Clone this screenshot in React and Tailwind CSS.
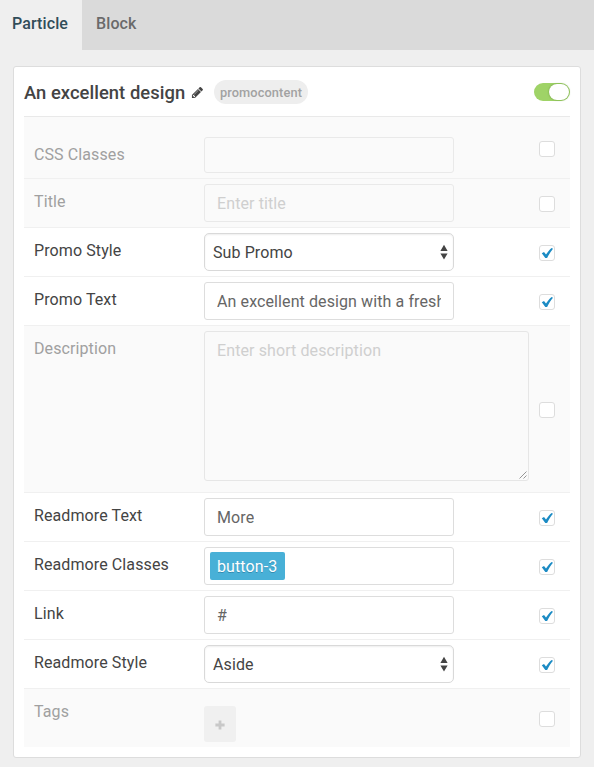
import { clsx } from "clsx";

function Check({ on, className }) {
  return (
    <span
      className={clsx(
        "ml-auto mr-[15px] flex size-4 shrink-0 items-center justify-center rounded-[3px] border border-[#dddddd] bg-white",
        className
      )}
    >
      {on && (
        <svg viewBox="0 0 14 14" className="size-3.5 shrink-0" fill="#1b8bc4">
          <path d="M1.8 7.3 L4 6.1 L6 8.6 C7.4 6.3 9.2 4 11.6 2 L13 2.7 C10.8 5.4 8.8 8.4 7.1 12.1 L5.3 12.1 Z" />
        </svg>
      )}
    </span>
  );
}

function Row({ label, on, height = "h-[49px]", labelPad = "pt-[11px]", fieldPad = "pt-[5px]", checkPad = "mt-[17px]", last, children }) {
  return (
    <div
      className={clsx(
        "flex items-start pl-2.5",
        height,
        !last && "border-b border-[#f0f0f0]",
        on ? "bg-white text-[#444444]" : "bg-[#fafafa] text-[#a0a0a0]"
      )}
    >
      <div className={clsx("w-[170px] shrink-0 leading-6", labelPad)}>{label}</div>
      <div className={fieldPad}>{children}</div>
      <Check on={on} className={checkPad} />
    </div>
  );
}

function Field({ children, muted, className = "h-[38px]" }) {
  return (
    <div
      className={clsx(
        "flex w-[250px] items-center rounded-[3px] border px-3 pt-0.5",
        className,
        muted ? "border-[#e9e9e9] bg-[#fafafa] text-[#cfcfcf]" : "border-[#dddddd] bg-white text-[#666666]"
      )}
    >
      <span className="overflow-hidden whitespace-nowrap leading-6">{children}</span>
    </div>
  );
}

function Select({ children }) {
  return (
    <div className="flex h-[38px] w-[250px] items-center justify-between rounded-[5px] border border-[#d9d9d9] bg-white pl-2 pr-[5px] text-[#444444] shadow-[inset_0_1px_2px_rgba(0,0,0,0.07)]">
      <span className="pt-0.5">{children}</span>
      <svg viewBox="0 0 8 16" className="h-4 w-2" fill="#444444">
        <path d="M4 0.8 L7.6 7 H0.4 Z M4 15.5 L7.6 9.4 H0.4 Z" />
      </svg>
    </div>
  );
}

export default function App() {
  return (
    <div className="h-[767px] w-[594px] overflow-hidden bg-[#efefef] font-['Roboto',sans-serif] text-[16px] tracking-[0.1px]">
      <nav className="flex h-[50px] bg-[#dadada] font-medium leading-6">
        <div className="w-[82px] bg-[#efefef] pl-3 pt-3 text-[#314d59]">Particle</div>
        <div className="pl-3.5 pt-3 text-[#6a6a6a]">Block</div>
      </nav>

      <section className="ml-[13px] mt-4 h-[692px] w-[568px] rounded-[3px] border border-[#dddddd] bg-white px-2.5">
        <header className="flex h-[50px] items-center border-b border-[#e9e9e9] pt-px">
          <h1 className="w-[161px] whitespace-nowrap pt-0.5 text-[18.4px] font-medium tracking-[0.04px] text-[#444444]">
            An excellent design
          </h1>
          <svg viewBox="0 0 1792 1792" className="ml-1.5 size-[13px]" fill="#444444">
            <path d="M491 1536l91-91-235-235-91 91v107h128v128h107zm523-928q0-22-22-22-10 0-17 7l-542 542q-7 7-7 17 0 22 22 22 10 0 17-7l542-542q7-7 7-17zm-54-192l416 416-832 832h-416v-416zm683 96q0 53-37 90l-166 166-416-416 166-165q36-38 90-38 53 0 91 38l235 234q37 39 37 91z" />
          </svg>
          <span className="ml-2.5 flex h-6 w-[94px] items-center justify-center rounded-full bg-[#eeeeee] pt-px text-[12.8px] font-medium text-[#a2a2a2]">
            promocontent
          </span>
          <div className="ml-auto flex h-[18px] w-9 items-center justify-end rounded-full bg-[#9fd367] pr-px">
            <div className="h-4 w-5 rounded-full bg-white shadow-[0_0_2px_rgba(60,110,20,0.6)]" />
          </div>
        </header>

        <Row label="CSS Classes" height="h-[62px]" labelPad="pt-[26px]" fieldPad="pt-5" checkPad="mt-6">
          <Field muted className="h-9" />
        </Row>
        <Row label="Title">
          <Field muted>Enter title</Field>
        </Row>
        <Row label="Promo Style" on>
          <Select>Sub Promo</Select>
        </Row>
        <Row label="Promo Text" on>
          <Field>An excellent design with a fresh</Field>
        </Row>
        <Row label="Description" height="h-[167px]" checkPad="mt-[76px]">
          <div className="flex h-[150px] w-[325px] justify-between rounded-[3px] border border-[#e6e6e6] bg-[#fafafa] pl-3 pr-px pt-[7px] leading-6 text-[#cfcfcf]">
            <span>Enter short description</span>
            <svg viewBox="0 0 8 8" className="mb-px size-2 self-end" stroke="#8a8a8a" strokeWidth="0.9">
              <path d="M0.5 7.5 L7.5 0.5 M4.5 7.5 L7.5 4.5" />
            </svg>
          </div>
        </Row>
        <Row label="Readmore Text" on>
          <Field>More</Field>
        </Row>
        <Row label="Readmore Classes" on>
          <div className="flex h-[38px] w-[250px] items-center rounded-[3px] border border-[#dddddd] bg-white pl-[5px]">
            <span className="flex h-7 w-[75px] items-center rounded-[2px] bg-[#48b0d7] pl-[7px] pt-0.5 text-white [text-shadow:0_1px_0_rgba(0,51,83,0.3)]">
              button-3
            </span>
          </div>
        </Row>
        <Row label="Link" on>
          <Field>#</Field>
        </Row>
        <Row label="Readmore Style" on>
          <Select>Aside</Select>
        </Row>
        <Row label="Tags" height="h-[58px]" fieldPad="pt-[17px]" checkPad="mt-[22px]" last>
          <div className="flex h-9 w-8 items-center justify-center rounded-[3px] bg-[#f0f0f0]">
            <svg viewBox="0 0 10 10" className="mt-0.5 size-2.5" fill="#c8c8c8">
              <path d="M3.6 0.4h2.8v3.2h3.2v2.8H6.4v3.2H3.6V6.4H0.4V3.6h3.2z" />
            </svg>
          </div>
        </Row>
      </section>
    </div>
  );
}
